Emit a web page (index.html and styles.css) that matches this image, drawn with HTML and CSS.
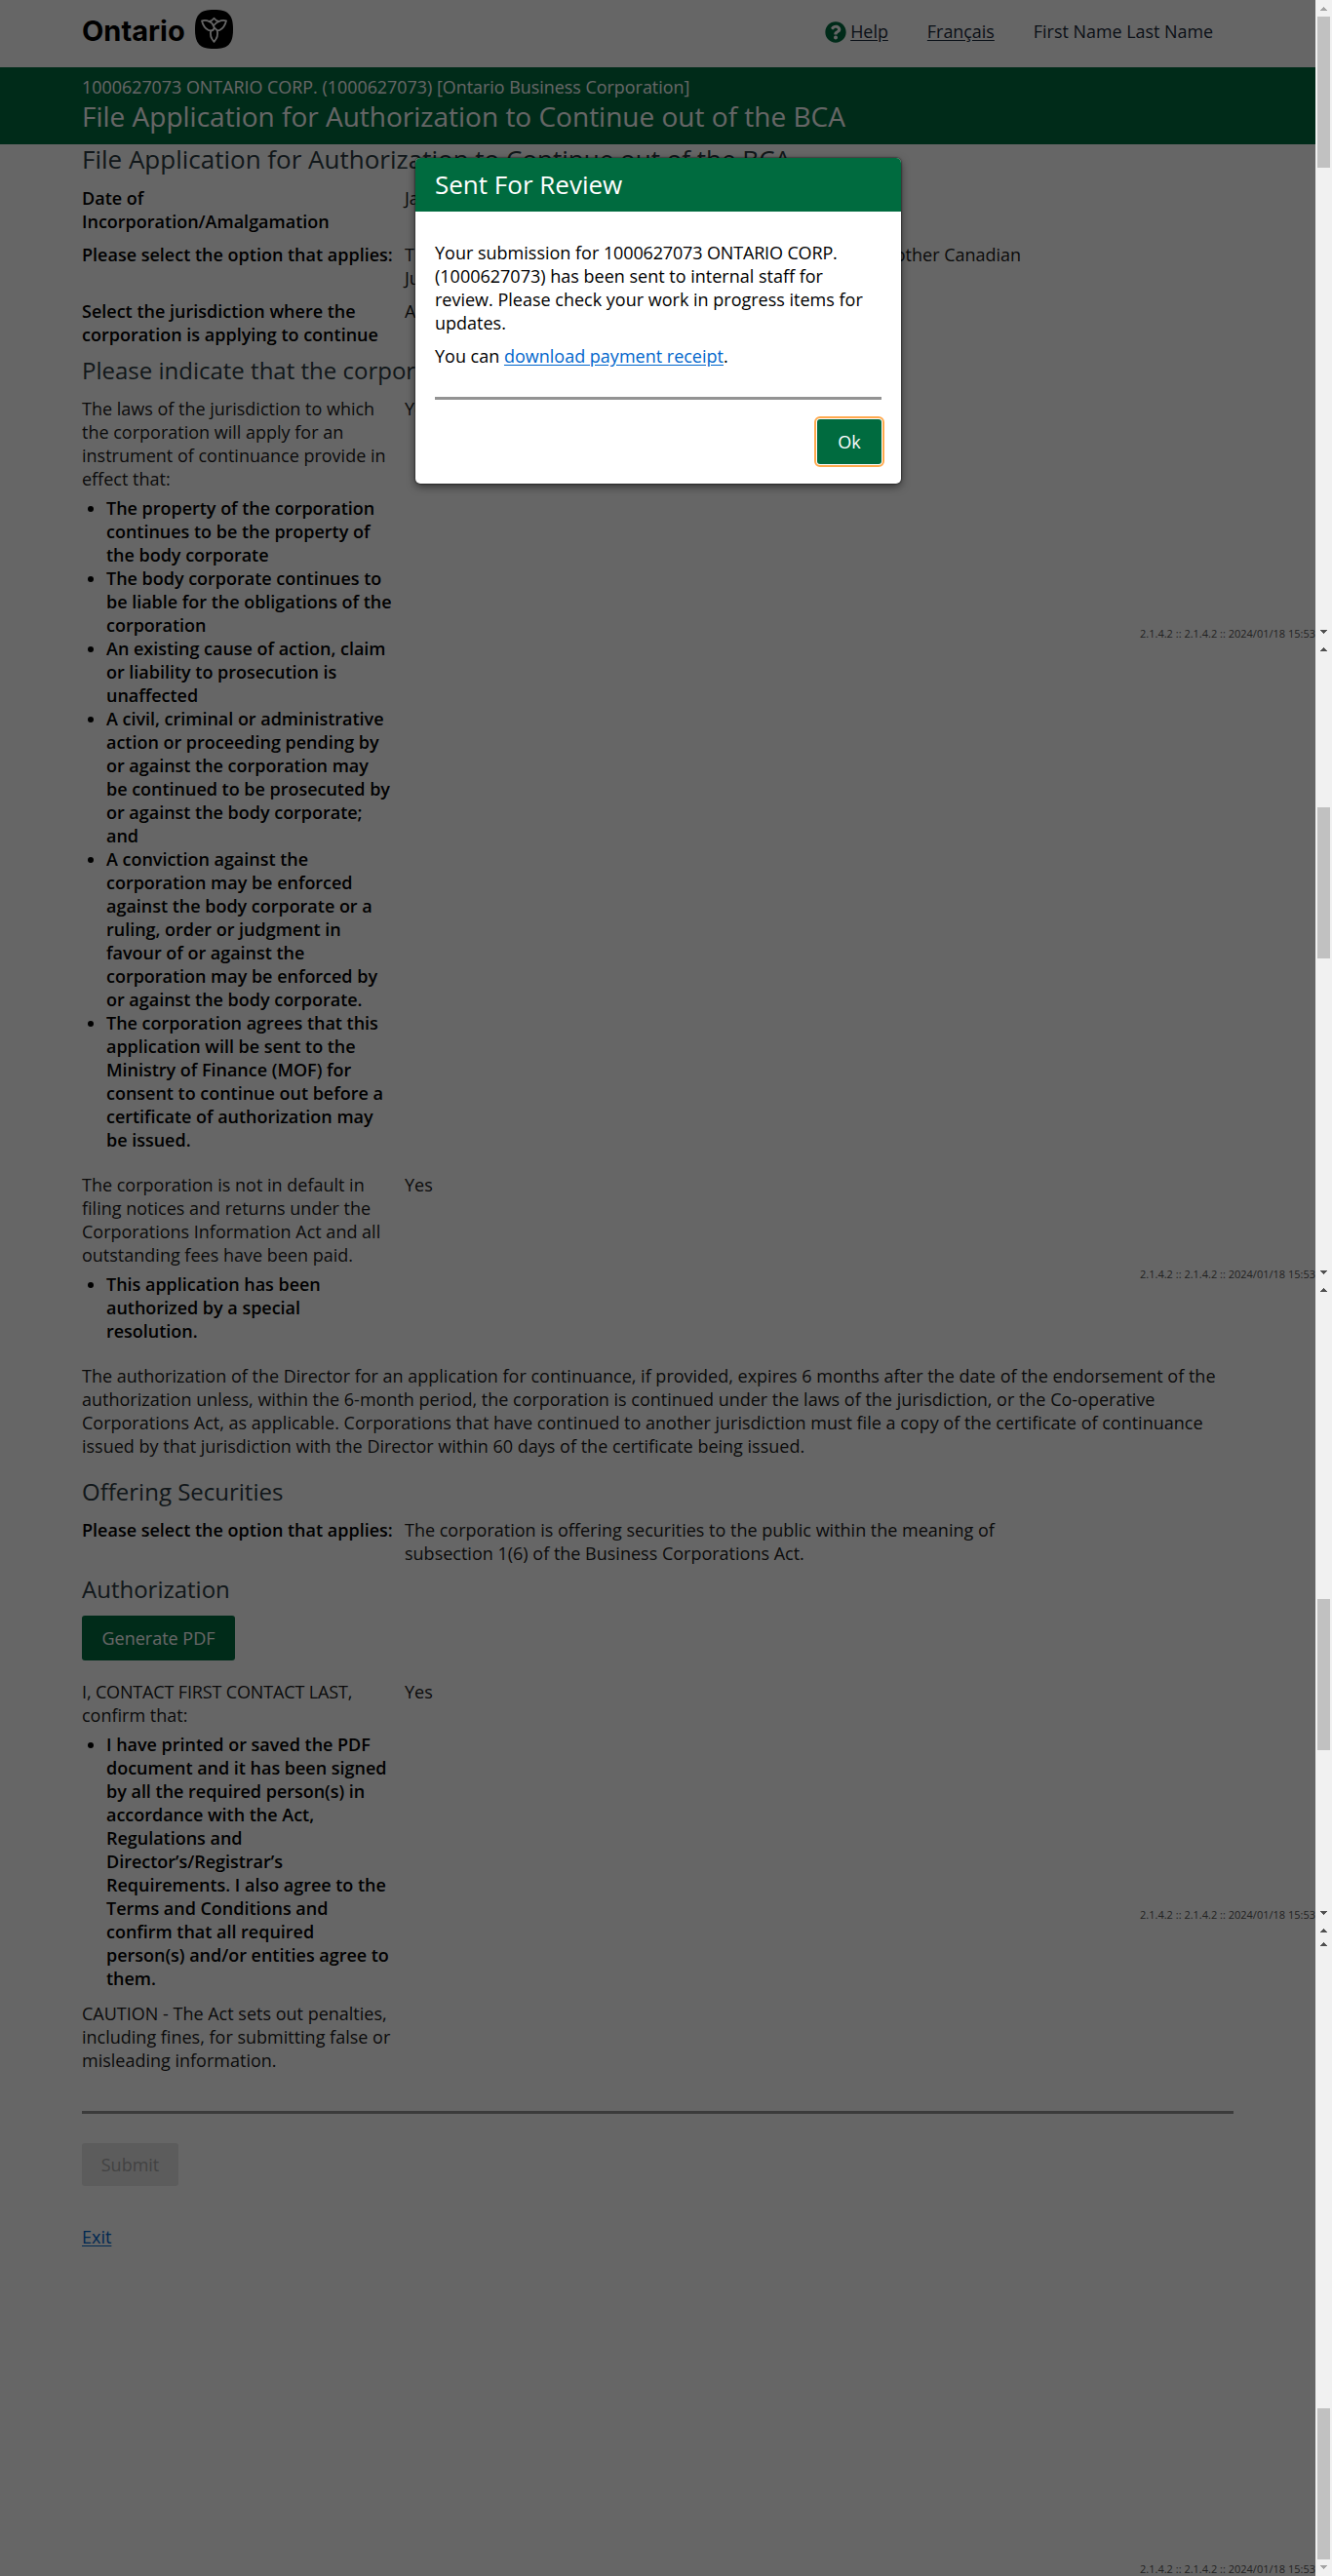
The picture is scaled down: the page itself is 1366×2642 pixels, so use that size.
FILE: index.html
```
<!DOCTYPE html>
<html lang="en">
<head>
<meta charset="utf-8">
<title>File Application for Authorization to Continue out of the BCA</title>
<link rel="stylesheet" href="styles.css">
</head>
<body>
<div class="shell">
  <div class="page">
    <header class="topbar">
      <div class="logo">
        <span class="logo-word">Ontario</span>
        <svg class="logo-mark" viewBox="0 0 39 40">
          <path fill="#000" d="M19.500 0C34 0 39 5 39 20S34 40 19.500 40 0 35 0 20 5 0 19.500 0Z"/>
          <g fill="none" stroke="#fff" stroke-width="1.800" stroke-linejoin="round" stroke-linecap="round">
            <path d="M7 11.300C10 10.600 12.500 11 14.500 12 17 11.500 18.500 10 19.500 8.700 20.500 10 22 11.500 24.500 12 26.500 11 29 10.600 32 11.300 31 15.500 29 19 25.500 20.800L22.800 21.500C23.800 25.500 22.500 29.500 19.500 32.800 16.500 29.500 15.200 25.500 16.200 21.500L13.500 20.800C10 19 8 15.500 7 11.300Z"/>
            <path d="M14.500 12C16.500 13 18.500 14.800 18.800 16.500 19.200 18.500 21 20 22.800 21.300M24.500 12C22 13 20.500 14.500 18.800 16.500M16.200 21.500C18 21.500 19.300 20.500 19.600 18.600"/>
          </g>
        </svg>
      </div>
      <nav class="topnav">
        <span class="help"><svg class="help-icon" viewBox="0 0 512 512"><path fill="#006b3f" d="M504 256c0 137-111 248-248 248S8 393 8 256 119 8 256 8s248 111 248 248zM262.700 90c-54.500 0-89.300 23-116.500 63.800-3.500 5.300-2.400 12.400 2.700 16.300l34.700 26.300c5.200 3.900 12.600 3 16.700-2.100 17.900-22.700 30.100-35.800 57.300-35.800 20.400 0 45.700 13.100 45.700 33 0 15-12.400 22.700-32.500 34C247.100 238.500 216 254.900 216 296v4c0 6.600 5.400 12 12 12h56c6.600 0 12-5.400 12-12v-1.300c0-28.500 83.200-29.600 83.200-106.700 0-58-60.200-102-116.500-102zM256 338c-25.400 0-46 20.600-46 46s20.600 46 46 46 46-20.600 46-46-20.600-46-46-46z"/></svg><a class="navlink">Help</a></span>
        <a class="navlink">Français</a>
        <span>First Name Last Name</span>
      </nav>
    </header>
    <div class="banner">
      <div class="banner-corp">1000627073 ONTARIO CORP. (1000627073) [Ontario Business Corporation]</div>
      <div class="banner-title">File Application for Authorization to Continue out of the BCA</div>
    </div>
    <main class="content">
      <h2 class="heading heading-main">File Application for Authorization to Continue out of the BCA</h2>
      <div class="field"><div class="label">Date of<br>Incorporation/Amalgamation</div><div class="value">Jan 17, 2024</div></div>
      <div class="field"><div class="label">Please select the option that applies:</div><div class="value">The corporation wants to be continued under the laws of another Canadian<br>Jurisdiction</div></div>
      <div class="field"><div class="label">Select the jurisdiction where the corporation is applying to continue</div><div class="value">Alberta</div></div>
      <h2 class="heading">Please indicate that the corporation</h2>
      <div class="field">
        <div class="statement">
          <p>The laws of the jurisdiction to which the corporation will apply for an instrument of continuance provide in effect that:</p>
          <ul>
            <li>The property of the corporation continues to be the property of<br>the body corporate</li>
            <li>The body corporate continues to<br><span class="nowrap">be liable for the obligations of the</span><br>corporation</li>
            <li>An existing cause of action, claim or liability to prosecution is unaffected</li>
            <li>A civil, criminal or administrative action or proceeding pending by or against the corporation may<br><span class="nowrap">be continued to be prosecuted by</span><br>or against the body corporate; and</li>
            <li>A conviction against the corporation may be enforced against the body corporate or a ruling, order or judgment in favour of or against the corporation may be enforced by or against the body corporate.</li>
            <li>The corporation agrees that this application will be sent to the Ministry of Finance (MOF) for consent to continue out before a certificate of authorization may<br>be issued.</li>
          </ul>
        </div>
        <div class="value">Yes</div>
      </div>
      <div class="field">
        <div class="statement">
          <p>The corporation is not in default in filing notices and returns under the Corporations Information Act and all outstanding fees have been paid.</p>
          <ul><li>This application has been authorized by a special<br>resolution.</li></ul>
        </div>
        <div class="value">Yes</div>
      </div>
      <p class="notice">The authorization of the Director for an application for continuance, if provided, expires 6 months after the date of the endorsement of the authorization unless, within the 6-month period, the corporation is continued under the laws of the jurisdiction, or the Co-operative Corporations Act, as applicable. Corporations that have continued to another jurisdiction must file a copy of the certificate of continuance issued by that jurisdiction with the Director within 60 days of the certificate being issued.</p>
      <h2 class="heading">Offering Securities</h2>
      <div class="field"><div class="label">Please select the option that applies:</div><div class="value">The corporation is offering securities to the public within the meaning of subsection 1(6) of the Business Corporations Act.</div></div>
      <h2 class="heading">Authorization</h2>
      <button class="btn btn-pdf">Generate PDF</button>
      <div class="field">
        <div class="statement">
          <p><span class="contact">I, CONTACT FIRST CONTACT LAST,</span> confirm that:</p>
          <ul><li>I have printed or saved the PDF document and it has been signed by all the required person(s) in accordance with the Act, Regulations and Director’s/Registrar’s Requirements. I also agree to the Terms and Conditions and<br>confirm that all required<br><span class="nowrap">person(s) and/or entities agree to</span><br>them.</li></ul>
          <p>CAUTION - The Act sets out penalties, including fines, for submitting false or misleading information.</p>
        </div>
        <div class="value">Yes</div>
      </div>
      <hr class="rule">
      <button class="btn btn-submit" disabled>Submit</button>
      <a class="exit">Exit</a>
    </main>
    <div class="version version-1">2.1.4.2 :: 2.1.4.2 :: 2024/01/18 15:53</div>
    <div class="version version-2">2.1.4.2 :: 2.1.4.2 :: 2024/01/18 15:53</div>
    <div class="version version-3">2.1.4.2 :: 2.1.4.2 :: 2024/01/18 15:53</div>
    <div class="version version-4">2.1.4.2 :: 2.1.4.2 :: 2024/01/18 15:53</div>
    <div class="backdrop"></div>
    <section class="dialog" role="dialog">
      <h1 class="dialog-title">Sent For Review</h1>
      <div class="dialog-body">
        <p>Your submission for <span class="contact">1000627073 ONTARIO CORP.</span> (1000627073) has been sent to internal staff for review. Please check your work in progress items for updates.</p>
        <p>You can <a class="receipt">download payment receipt</a>.</p>
        <div class="dialog-actions"><button class="btn btn-ok">Ok</button></div>
      </div>
    </section>
  </div>
  <aside class="scroll">
    <svg width="17" height="2642" viewBox="0 0 17 2642" shape-rendering="crispEdges">
      <g fill="#c1c1c1"><path d="M2 17h13v155H2zM2 828h13v155H2zM2 1640h13v155H2zM2 2470h13v155H2z"/></g>
      <path fill="#a3a3a3" d="M5 11h7L8.500 7z"/>
      <g fill="#505050">
        <path d="M5 646h7l-3.500 4zM5 668h7l-3.500-4zM5 1303h7l-3.500 4zM5 1325h7l-3.500-4zM5 1960h7l-3.500 4zM5 1982h7l-3.500-4zM5 1996h7l-3.500-4z"/>
      </g>
      <path fill="#a3a3a3" d="M5 2631h7l-3.500 4z"/>
    </svg>
  </aside>
</div>
</body>
</html>
```
FILE: styles.css
```
* { box-sizing: border-box; }
body { margin: 0; font: 18px/24px "Open Sans", "Noto Sans", sans-serif; color: #1a1a1a; background: #fff; }
p, ul, h1, h2 { margin: 0; }
.shell { display: flex; width: 1366px; height: 2642px; overflow: hidden; }
.page { position: relative; flex: 1; background: #fff; }
.scroll { width: 17px; background: #f1f1f1; }
.scroll svg { display: block; }
.nowrap { white-space: nowrap; }

.topbar { display: flex; justify-content: space-between; height: 69px; padding: 10px 105px 0 84px; }
.logo { display: flex; }
.logo-word { width: 116px; font: 700 29px/44px Inter, sans-serif; color: #000; }
.logo-mark { width: 39px; height: 40px; }
.topnav { display: flex; gap: 40px; padding-top: 10px; color: #1a2a3a; font-size: 17.900px; }
.navlink { text-decoration: underline; text-underline-offset: 2px; }
.help { display: flex; gap: 4px; }
.help-icon { width: 22px; height: 22px; margin-top: 2px; }

.banner { height: 79px; padding: 8px 84px 0; background: #006b3f; color: #fff; }
.banner-corp { font-size: 17.900px; line-height: 24px; }
.banner-title { font-size: 28px; line-height: 36px; }

.content { display: flex; flex-direction: column; align-items: flex-start; padding: 0 84px; }
.heading { margin: -1px 0 11px; font-size: 24px; font-weight: 400; line-height: 32px; color: #2b3a42; }
.heading-main { margin-bottom: 12px; font-size: 26px; }
.field { display: flex; gap: 12px; margin-bottom: 10px; }
.label, .statement { width: 319px; flex: none; }
.label, .statement ul { font-weight: 600; color: #000; }
.label { white-space: nowrap; }
.field:nth-of-type(3) .label { white-space: normal; }
.value { width: 660px; }
.statement ul { margin: 6px 0 12px; padding-left: 25px; letter-spacing: -.02px; }
.contact { letter-spacing: -.15px; }
.notice { margin-bottom: 20px; }
.rule { width: 100%; height: 3px; margin: 30px 0; border: 0; background: #939393; }
.btn { font: 500 18px/24px "Open Sans", sans-serif; border: 0; border-radius: 3px; color: #fff; background: #006b3f; }
.btn-pdf { width: 157px; height: 46px; margin-bottom: 20px; }
.btn-submit { width: 99px; height: 44px; font-weight: 400; color: #a6a6a6; background: #e6e6e6; }
.exit { margin-top: 40px; color: #0066cc; text-decoration: underline; text-underline-offset: 2px; }

.version { position: absolute; right: 0; font-size: 11px; line-height: 16px; white-space: nowrap; color: #555; }
.version-1 { top: 642px; }
.version-2 { top: 1299px; }
.version-3 { top: 1956px; }
.version-4 { top: 2627px; }

.backdrop { position: absolute; inset: 0; background: rgba(0, 0, 0, .6); }
.dialog { position: absolute; left: 426px; top: 162px; width: 498px; height: 334px; overflow: hidden; border-radius: 5px; background: #fff; box-shadow: 0 3px 8px rgba(0, 0, 0, .5), 0 0 2px #000; }
.dialog-title { height: 55px; padding: 0 20px; font-size: 26px; font-weight: 400; line-height: 54px; color: #fff; background: #006b3f; }
.dialog-body { padding: 30px 20px 0; color: #000; }
.dialog-body p { margin-bottom: 10px; }
.receipt { color: #0066cc; text-decoration: underline; text-underline-offset: 2px; }
.dialog-actions { display: flex; justify-content: flex-end; margin-top: 30px; padding-top: 20px; border-top: 3px solid #939393; }
.btn-ok { width: 66px; height: 46px; outline: 2px solid #ffa94d; outline-offset: 1px; }
```
